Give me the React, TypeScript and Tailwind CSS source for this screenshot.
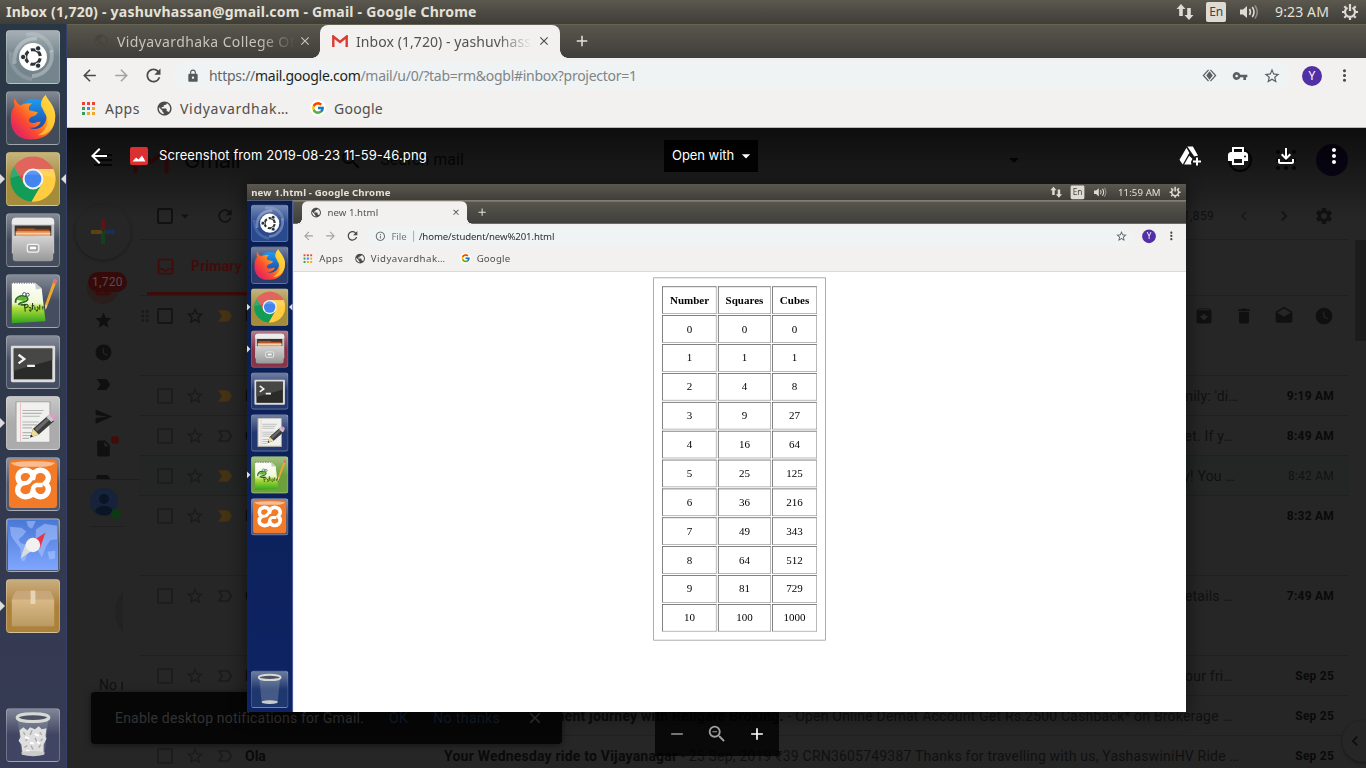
import React from "react";
import {
  MdAdd, MdArchive, MdArrowBack, MdArrowDropDown, MdArrowForward, MdChevronLeft,
  MdChevronRight, MdClose, MdDelete, MdDrafts, MdDragIndicator, MdInfoOutline, MdInsertDriveFile,
  MdLabel, MdLabelImportant, MdLabelImportantOutline, MdLock, MdMenu, MdMoreVert, MdMoveToInbox,
  MdOutlineFileDownload, MdOutlineInbox, MdPublic, MdRefresh, MdRemove, MdSearch, MdSend, MdSettings, MdStar,
  MdStarBorder, MdVpnKey, MdWatchLater, MdZoomOut,
} from "react-icons/md";
import { FcGoogle } from "react-icons/fc";

/* ------------------------------ Dock icons ------------------------------ */

const art = "block h-full w-full";

const UbuntuArt = () => (
  <svg viewBox="0 0 54 54" className={art}>
    <g fill="none" stroke="#fff" strokeWidth="4">
      <path d="M8 34C6 18 17 7 31 8" opacity=".3" />
      <path d="M46 20c3 14-6 26-20 27" opacity=".3" />
      <path d="M20 4c14-3 25 6 27 18" opacity=".18" />
      <path d="M4 22c-2 14 8 26 22 28" opacity=".15" />
    </g>
    <circle cx="27" cy="27" r="14.5" fill="#fff" />
    <circle cx="27" cy="27" r="7.6" fill="none" stroke="#2b3338" strokeWidth="3.2" strokeDasharray="13 2.9" strokeDashoffset="-1.5" />
    <g fill="#2b3338" stroke="#fff" strokeWidth="1">
      <circle cx="16.8" cy="27" r="2.8" />
      <circle cx="32.3" cy="18" r="2.8" />
      <circle cx="32.3" cy="36" r="2.8" />
    </g>
  </svg>
);

const FirefoxArt = () => (
  <svg viewBox="0 0 54 54" className={art}>
    <defs>
      <linearGradient id="fxBody" x1="0.9" y1="0.1" x2="0.15" y2="0.8">
        <stop offset="0" stopColor="#ffe94a" />
        <stop offset=".4" stopColor="#ff9a1f" />
        <stop offset=".75" stopColor="#fb4a30" />
        <stop offset="1" stopColor="#e62a5c" />
      </linearGradient>
      <linearGradient id="fxGlobe" x1="0" y1="0" x2="0" y2="1">
        <stop offset="0" stopColor="#1f9bf0" />
        <stop offset="1" stopColor="#1b3d9c" />
      </linearGradient>
    </defs>
    <circle cx="28" cy="25" r="18" fill="url(#fxGlobe)" />
    <path d="M8 6c1 4 3 6 6 8 3-2 8-3 12-2-3 2-4 4-3 7l9 2c-1 3-4 4-7 5-3 2-3 5 0 6 4 1 6-2 10-1-2 5-7 7-12 6 8 4 17-1 18-10 0-5-2-8-5-11-2-4 0-9 4-13 2 5 9 10 10 20 1 16-9 26-23 26C13 51 3 41 4 27c0-7 2-10 4-12-1-3-1-6 0-9z" fill="url(#fxBody)" />
    <path d="M40 3c3 8 9 12 10 20 1 14-8 22-18 22 8-4 12-12 9-20-4-6-7-12-1-22z" fill="#ffd23c" opacity=".75" />
  </svg>
);

const ChromeArt = () => (
  <svg viewBox="0 0 54 54" className={art}>
    <path d="M27 16.500H48.020A23.500 23.500 0 0 0 7.400 14.050L17.900 32.250Z" fill="#db4b3f" />
    <path d="M27 16.500H48.020A23.500 23.500 0 0 0 7.400 14.050L17.900 32.250Z" fill="#119c58" transform="rotate(-120 27 27)" />
    <path d="M27 16.500H48.020A23.500 23.500 0 0 0 7.400 14.050L17.900 32.250Z" fill="#ffcd42" transform="rotate(120 27 27)" />
    <circle cx="27" cy="27" r="10.800" fill="#f3f3f3" />
    <circle cx="27" cy="27" r="8.700" fill="#4384f0" />
    <path d="M4 26a23 23 0 0 1 46 0C38 21 16 21 4 26z" fill="#fff" opacity=".15" />
  </svg>
);

const FilesArt = () => (
  <svg viewBox="0 0 54 54" className={art}>
    <defs>
      <linearGradient id="flFront" x1="0" y1="0" x2="0" y2="1">
        <stop offset="0" stopColor="#d4d4d4" />
        <stop offset="1" stopColor="#989898" />
      </linearGradient>
    </defs>
    <path d="M5 8q0-4 4-4h36q4 0 4 4v33H5z" fill="#c4c4c4" />
    <path d="M5 8q0-4 4-4h36q4 0 4 4v3H5z" fill="#ececec" />
    <path d="M8 12h38v14H8z" fill="#3a342f" />
    <path d="M10 15h18l2 1h14v10H10z" fill="#b5521f" />
    <path d="M9 18h36v8H9z" fill="#e9a166" />
    <path d="M9 20h36v1H9z" fill="#f7e0c6" />
    <path d="M6 22.500q14 1 42 0V46q0 3-3 3H9q-3 0-3-3z" fill="url(#flFront)" />
    <rect x="21" y="31.500" width="12" height="8" rx="2" fill="#a9a9a9" stroke="#f2f2f2" strokeWidth="1.300" />
    <rect x="24" y="34" width="6" height="2.500" fill="#fff" />
  </svg>
);

const NotepadqqArt = () => (
  <svg viewBox="0 0 54 54" className={art}>
    <defs>
      <linearGradient id="nqPage" x1="0" y1="0" x2="0" y2="1">
        <stop offset="0" stopColor="#fff" />
        <stop offset=".5" stopColor="#eef8d6" />
        <stop offset=".62" stopColor="#b4de3c" />
        <stop offset="1" stopColor="#2fa51c" />
      </linearGradient>
    </defs>
    <path d="M5 8h24l7 6 4 34-35 2z" fill="url(#nqPage)" />
    <path d="M29 8l1 7 6-1z" fill="#c9c9c9" />
    <path d="M5 8h24" stroke="#777" strokeWidth="2" strokeDasharray="1 1.500" />
    <path d="M9 29c-1-5 4-8 8-7 4 0 6 3 3 5-3 2-7 1-8 4M14 31h6" fill="none" stroke="#2b6b1a" strokeWidth="1.800" />
    <path d="M10 26c2-4 8-5 11-2l-3 3z" fill="#5cb82c" />
    <circle cx="18" cy="20" r="1.800" fill="#fff" stroke="#345" strokeWidth=".9" />
    <circle cx="21.500" cy="20.500" r="1.600" fill="#fff" stroke="#345" strokeWidth=".9" />
    <path d="M18 30l1 8M18 31q4-2 4 2l-3 1M23 34q2-1 2 2t-2 0M26.500 29v7M25.500 32h3M29 33v3M31 33q2 0 1 3t-2 0M34 31v5M36 33q2 0 1 3M38 33h4" fill="none" stroke="#24421a" strokeWidth="1.100" />
    <path d="M49 4l3 1.500L42 32l-2 4-.500-5z" fill="#f0a62f" />
    <path d="M49 4l3 1.500-1.500 4-3-1.500z" fill="#d9727c" />
    <path d="M39.500 31l2.500 1-2 4z" fill="#e9d2a7" />
  </svg>
);

const TerminalArt = () => (
  <svg viewBox="0 0 54 54" className={art}>
    <rect x="4" y="10" width="46" height="38" rx="1.500" fill="#dcdcdc" />
    <rect x="7" y="13" width="40" height="32" fill="#2a2a29" />
    <path d="M7 13h40v12L7 36z" fill="#474746" />
    <path d="M12 19.500l6 4.500-6 4.500M21 31h8" fill="none" stroke="#f3f3f3" strokeWidth="2.400" />
  </svg>
);

const EditorArt = () => (
  <svg viewBox="0 0 54 54" className={art}>
    <rect x="8.500" y="4.500" width="37" height="44" rx="1" fill="#a9a9a9" />
    <rect x="10" y="5.500" width="34" height="41" fill="#f0f0ef" />
    <path d="M14 6v40" stroke="#f0b4b4" strokeWidth=".8" />
    <path d="M16 14h22M16 17h20M16 20h18M16 26h17M16 29h15M16 32h10M16 37h9M16 40h9M16 43h7" stroke="#b5b5b5" strokeWidth="1.200" />
    <path d="M24 42l3-9 16-14 6 6-16 14z" fill="#3c3c3c" />
    <path d="M29 33l15-13 2 2-15 14z" fill="#6a6a6a" />
    <path d="M24 42l3-9 6 6z" fill="#ecdc95" />
    <path d="M24 42l1-3 2 2z" fill="#222" />
    <path d="M41 21l3-3 5 6-3 2z" fill="#c8c8c8" />
    <path d="M44 18q3-2 5 1 2 2 0 4l-1 1z" fill="#e39ac9" />
  </svg>
);

const XamppArt = () => (
  <svg viewBox="0 0 54 54" className={art}>
    <rect x="2" y="2" width="50" height="50" rx="4" fill="#f37a26" />
    <path d="M4 5q23-3 46 0-2 3-10 4H14Q6 8 4 5z" fill="#fff" opacity=".5" />
    <path d="M27 20C27 13 19 11 14 14.500 10 18 11 24 15 26.500 10 30 10 36 14 38.500 19 42 27 40 27 34 28 40 35 42 40 38.500 44 35 44 29 39.500 26.500 44 23 44 18 40 14.500 35 11 27 13 27 20Z" fill="none" stroke="#fff" strokeWidth="5.500" strokeLinejoin="round" />
    <path d="M15 26q7 1 9-3 2-3 3-3v3M27 33q0-4 4-5h6" fill="none" stroke="#fff" strokeWidth="4.500" />
  </svg>
);

const MapArt = () => (
  <svg viewBox="0 0 54 54" className={art}>
    <defs>
      <linearGradient id="mpSea" x1="0" y1="0" x2="0" y2="1">
        <stop offset="0" stopColor="#4a78d6" />
        <stop offset="1" stopColor="#7fa6ff" />
      </linearGradient>
    </defs>
    <rect x="1" y="1" width="52" height="52" fill="url(#mpSea)" />
    <path d="M3 8l12 1 5 4-4 5-4 3 2 4 6 2 3 5-5 12-3-1-1-12-6-8-4-6zM20 2h10l-4 8-4-2zM30 11l9-6 13 2v14l-7 1-4 6-4-4-7-1zM29 22l8 0 4 6-5 12-5-10zM42 34l8-1v8l-6 1z" fill="#b4ccff" opacity=".5" />
    <path d="M40 14L34 31l-9-7z" fill="#e9354c" />
    <path d="M14 41l6-17 9 7z" fill="#d8dcdf" />
    <circle cx="27" cy="27" r="7.500" fill="#f1f1f1" />
  </svg>
);

const BoxArt = () => (
  <svg viewBox="0 0 54 54" className={art}>
    <defs>
      <linearGradient id="bxFront" x1="0" y1="0" x2="0" y2="1">
        <stop offset="0" stopColor="#d9b987" />
        <stop offset="1" stopColor="#bb9a62" />
      </linearGradient>
    </defs>
    <path d="M9 11h36l4 10v27H5V21z" fill="#b18c50" />
    <path d="M9 11h36l4 9H5z" fill="#c9a67a" />
    <rect x="5" y="20" width="44" height="28" rx="1" fill="url(#bxFront)" />
    <path d="M24.500 11h5v14h-5z" fill="#eadbc0" opacity=".85" />
  </svg>
);

const TrashArt = ({ full }: { full?: boolean }) => (
  <svg viewBox="0 0 54 54" className={art}>
    <path d="M11 9h32l-4 38q-12 3-24 0z" fill="#aeb6c4" opacity=".28" />
    {full && (
      <g>
        <path d="M13 22l4-3 4 3 3-3 5 2 4-3 3 3 5-1-1 8 1 3-3 6 0 8q-11 3-22 0l-1-8-3-4 2-4z" fill="#dedede" />
        <path d="M17 24l2 3M26 22l-2 5M34 24l2 3M19 33l3-2M29 30l2 4M35 33l2-2M18 40l3-2M25 38l2 4M33 40l2-3" stroke="#a9a9a9" strokeWidth="1.400" />
        <path d="M19 29l4 2M29 26l4 2M24 35l4 1M34 36l-3-2M20 43l4 1" stroke="#fff" strokeWidth="2" />
      </g>
    )}
    <path d="M15 45q12-3 24 0l-.5 2.500q-11 3-23 0z" fill="#c9ccc9" />
    <ellipse cx="27" cy="9" rx="16.500" ry="4" fill="#4c5263" stroke="#d7d9d5" strokeWidth="3" />
  </svg>
);

type Tile = { id: string; tone: string; icon: React.ReactNode; left?: boolean; right?: boolean };

const DockTile = ({ tile }: { tile: Tile }) => (
  <div className="relative mx-auto h-[54px] w-[67px] shrink-0">
    {tile.left && <span className="absolute left-0 top-[22px] border-y-[5px] border-l-[5px] border-y-transparent border-l-[#dcdcdc]" />}
    {tile.right && <span className="absolute right-px top-[22px] border-y-[5px] border-r-[5px] border-y-transparent border-r-[#dcdcdc]" />}
    <div className={`ml-[6px] h-[54px] w-[54px] overflow-hidden rounded-[4px] border border-white/25 bg-linear-to-b from-white/35 to-transparent to-50% ${tile.tone}`}>
      {tile.icon}
    </div>
  </div>
);

const Dock = ({ tiles, trash, skin }: { tiles: Tile[]; trash: Tile; skin: string }) => (
  <aside className={`flex w-[67px] shrink-0 flex-col gap-[7px] border-r pb-[6px] pt-[6px] ${skin}`}>
    {tiles.map((t) => <DockTile key={t.id} tile={t} />)}
    <div className="mt-auto"><DockTile tile={trash} /></div>
  </aside>
);

const hostTiles: Tile[] = [
  { id: "dash", tone: "bg-[#74858d]", icon: <UbuntuArt /> },
  { id: "firefox", tone: "bg-[#414b5a]", icon: <FirefoxArt /> },
  { id: "chrome", tone: "bg-[#a58c3a]", icon: <ChromeArt />, left: true, right: true },
  { id: "files", tone: "bg-[#434d5d]", icon: <FilesArt /> },
  { id: "notepad", tone: "bg-[#454e60]", icon: <NotepadqqArt /> },
  { id: "terminal", tone: "bg-[#454e62]", icon: <TerminalArt /> },
  { id: "editor", tone: "bg-[#ababab]", icon: <EditorArt />, left: true },
  { id: "xampp", tone: "bg-[#4c566c]", icon: <XamppArt /> },
  { id: "map", tone: "bg-[#4c566c]", icon: <MapArt /> },
  { id: "box", tone: "bg-[#ac813a]", icon: <BoxArt />, left: true },
];

const innerTiles: Tile[] = [
  { id: "dash", tone: "bg-[#2a4a90]", icon: <UbuntuArt /> },
  { id: "firefox", tone: "bg-[#2a3d6c]", icon: <FirefoxArt /> },
  { id: "chrome", tone: "bg-[#a58c3a]", icon: <ChromeArt />, left: true, right: true },
  { id: "files", tone: "bg-[#87344a]", icon: <FilesArt />, left: true },
  { id: "terminal", tone: "bg-[#23386f]", icon: <TerminalArt /> },
  { id: "editor", tone: "bg-[#23386f]", icon: <EditorArt /> },
  { id: "notepad", tone: "bg-[#6da03c]", icon: <NotepadqqArt />, left: true },
  { id: "xampp", tone: "bg-[#3f5585]", icon: <XamppArt /> },
];

/* ------------------------------ System bar ------------------------------ */

const SystemBar = ({ title, clock }: { title: string; clock: string }) => (
  <header className="flex h-6 shrink-0 items-center bg-linear-to-b from-[#5b584f] to-[#3e3d38] pl-[6px] pr-[7px] text-[#e6e1d6]">
    <h1 className="text-[14px] font-bold leading-6 tracking-[0.23px]">{title}</h1>
    <div className="ml-auto flex items-center">
      <svg viewBox="0 0 18 18" className="mr-[12px] h-[18px] w-[18px]" fill="#dfdbd2">
        <path d="M5 1l4.500 5H6.800v7H3.200V6H.5zM13 17l-4.500-5h2.700V5h3.600v7h2.700z" />
      </svg>
      <span className="mr-[13px] flex h-5 w-5 items-center justify-center rounded-[2px] bg-[#dfdbd2] text-[12px] tracking-[-0.2px] text-[#45433e]">En</span>
      <svg viewBox="0 0 20 18" className="mr-[16px] h-[18px] w-5" fill="none" stroke="#dfdbd2" strokeWidth="1.600">
        <path d="M1 6.500h3l4-3.500v12l-4-3.500H1z" fill="#dfdbd2" stroke="none" />
        <path d="M10.500 6q1.800 3 0 6M13.300 4q3.400 5 0 10" />
        <path d="M16 2.500q4.600 6.500 0 13" opacity=".45" />
      </svg>
      <span className="text-[14px] leading-6 tracking-[0.13px]">{clock}</span>
      <svg viewBox="0 0 18 18" className="ml-[12px] h-[18px] w-[18px]" fill="none" stroke="#dfdbd2">
        <path d="M6.500 4.600a5 5 0 1 0 5 0" strokeWidth="2.200" />
        <path d="M9 1v7M3.300 3.300l1.700 1.700M14.700 3.300L13 5M1 9h2.400M14.600 9H17M3.300 14.700L5 13M14.700 14.700L13 13M9 14.600V17" strokeWidth="2.200" />
      </svg>
    </div>
  </header>
);

/* ---------------------------- Browser chrome ---------------------------- */

const TabStrip = ({ children }: { children: React.ReactNode }) => (
  <div className="flex h-[34px] shrink-0 items-stretch border-t border-[#666350] bg-linear-to-b from-[#58564d] to-[#3f3e3a] pl-[13px]">
    {children}
    <MdAdd className="ml-[13px] mt-[7px] h-[18px] w-[18px] text-[#e4e2dc]" />
  </div>
);

const ActiveTab = ({ icon, label, gap }: { icon: React.ReactNode; label: string; gap: string }) => (
  <div className="relative flex w-[240px] items-center rounded-t-[8px] bg-[#f2f1ef] pb-px pl-3 pr-[9px] text-[14px] tracking-[0.07px] text-[#52524f]">
    <span className="absolute -left-2 bottom-0 h-2 w-2 bg-[radial-gradient(circle_at_0_0,transparent_7.5px,#f2f1ef_8px)]" />
    <span className="absolute -right-2 bottom-0 h-2 w-2 bg-[radial-gradient(circle_at_100%_0,transparent_7.5px,#f2f1ef_8px)]" />
    {icon}
    <span className={`w-[176px] overflow-hidden whitespace-nowrap mask-r-from-80% mask-r-to-100% ${gap}`}>{label}</span>
    <MdClose className="ml-auto h-[14px] w-[14px] text-[#4c4c49]" />
  </div>
);

const AppsGrid = () => (
  <svg viewBox="0 0 13 13" className="h-[13px] w-[13px]">
    {["#ea4335", "#ea4335", "#ea4335", "#34a05c", "#4285f4", "#f3a72b", "#34a05c", "#f3a72b", "#f3a72b"].map((c, i) => (
      <rect key={i} x={(i % 3) * 5} y={Math.floor(i / 3) * 5} width="3" height="3" fill={c} />
    ))}
  </svg>
);

const Bookmarks = () => (
  <nav className="flex h-[34px] shrink-0 items-center pb-[4px] pl-[15px] text-[14px] text-[#4f4f4c]">
    <AppsGrid />
    <span className="ml-[10px] w-[51px] tracking-[0.53px]">Apps</span>
    <MdPublic className="h-[17px] w-[17px] text-[#4a4a48]" />
    <span className="ml-[7px] w-[130px] tracking-[0.71px]">Vidyavardhak…</span>
    <span className="flex h-4 w-4 items-center justify-center rounded-full bg-white"><FcGoogle className="h-[14px] w-[14px]" /></span>
    <span className="ml-2 tracking-[0.3px]">Google</span>
  </nav>
);

const AddressRow = ({ dimBack, children, tools }: { dimBack?: boolean; children: React.ReactNode; tools?: React.ReactNode }) => (
  <div className="flex h-[35px] shrink-0 items-center pl-[13px] pr-[12px]">
    <MdArrowBack className={`h-[19px] w-[19px] ${dimBack ? "text-[#9e9e9b]" : "text-[#4a4a48]"}`} />
    <MdArrowForward className="ml-[13px] h-[19px] w-[19px] text-[#a3a3a0]" />
    <MdRefresh className="ml-[12px] h-[21px] w-[21px] text-[#4a4a48]" />
    <div className="ml-[10px] flex h-7 flex-1 items-center rounded-full bg-[#eff3f4] pl-3 pr-[9px] text-[14px]">
      {children}
      <span className="ml-auto flex items-center gap-[15px] text-[#5b5f61]">
        {tools}
        <MdStarBorder className="h-[18px] w-[18px]" />
      </span>
    </div>
    <span className="ml-3 flex h-5 w-5 items-center justify-center rounded-full bg-[#5130a5] text-[12px] text-white">Y</span>
    <MdMoreVert className="ml-[13px] h-[19px] w-[19px] text-[#4a4a48]" />
  </div>
);

/* --------------------- Desktop inside the previewed file --------------------- */

const tableRows = Array.from({ length: 11 }, (_, n) => [n, n * n, n * n * n]);

const PreviewDesktop = () => (
  <div className="flex h-[768px] w-[1366px] origin-top-left scale-[0.6875] flex-col bg-white">
    <SystemBar title="new 1.html - Google Chrome" clock="11:59 AM" />
    <div className="flex flex-1">
      <Dock tiles={innerTiles} trash={{ id: "trash", tone: "bg-[#1f376f]", icon: <TrashArt /> }} skin="bg-linear-to-b from-[#0a1e50] to-[#0e2464] border-[#132f7c]" />
      <div className="flex flex-1 flex-col">
        <TabStrip>
          <ActiveTab icon={<MdPublic className="h-[17px] w-[17px] text-[#4a4a48]" />} gap="ml-[8px]" label="new 1.html" />
        </TabStrip>
        <div className="border-b border-[#cfcfcd] bg-[#f2f1ef]">
          <AddressRow dimBack>
            <MdInfoOutline className="h-4 w-4 text-[#5f6365]" />
            <span className="ml-[8px] w-[25px] text-[#77797a]">File</span>
            <span className="ml-[7px] h-4 w-px bg-[#8b8d8e]" />
            <span className="ml-[7px] tracking-[-0.17px] text-[#2c2f30]">/home/student/new%201.html</span>
          </AddressRow>
          <Bookmarks />
        </div>
        <main className="flex-1 pt-2 font-['Liberation_Serif',serif] text-[16px] leading-[18px] text-black">
          <table className="mx-auto border-separate border-spacing-[2px] border border-[#8a8a8a] p-[10px] text-center">
            <thead>
              <tr>
                {["Number", "Squares", "Cubes"].map((h) => (
                  <th key={h} className="border border-b-[#9a9a9a] border-l-[#4a4a4a] border-r-[#9a9a9a] border-t-[#4a4a4a] p-[10px]">{h}</th>
                ))}
              </tr>
            </thead>
            <tbody>
              {tableRows.map((r) => (
                <tr key={r[0]}>
                  {r.map((v, i) => (
                    <td key={i} className="border border-b-[#9a9a9a] border-l-[#4a4a4a] border-r-[#9a9a9a] border-t-[#4a4a4a] p-[10px]">{v}</td>
                  ))}
                </tr>
              ))}
            </tbody>
          </table>
        </main>
      </div>
    </div>
  </div>
);

/* ------------------------------ Dimmed mailbox ------------------------------ */

type Mail = {
  tall?: boolean; hot?: boolean; read?: boolean; important?: boolean;
  sender: string; subject?: string; snippet?: string; pad?: string; date: string;
};

const mails: Mail[] = [
  { tall: true, hot: true, important: true, sender: "I", date: "" },
  { important: true, sender: "I", snippet: "family: 'di…", pad: "pr-[2px]", date: "9:19 AM" },
  { sender: "G", snippet: "internet. If y…", pad: "pr-[7px]", date: "8:49 AM" },
  { read: true, important: true, sender: "", snippet: "today! You …", pad: "pr-[5px]", date: "8:42 AM" },
  { tall: true, important: true, sender: "I", date: "8:32 AM" },
  { tall: true, sender: "G", snippet: "details …", pad: "pr-[7px]", date: "7:49 AM" },
  { sender: "I", snippet: "your fri…", pad: "pr-[7px]", date: "Sep 25" },
  { sender: "", subject: "investment journey with Religare Broking.", snippet: " - Open Online Demat Account Get Rs.2500 Cashback* on Brokerage …", pad: "pr-[8px]", date: "Sep 25" },
  { sender: "Ola", subject: "Your Wednesday ride to Vijayanagar", snippet: " - 25 Sep, 2019 ₹39 CRN3605749387 Thanks for travelling with us, YashaswiniHV Ride …", pad: "pr-px", date: "Sep 25" },
];

const MailRow = ({ mail }: { mail: Mail }) => (
  <div className={`mr-[17px] flex shrink-0 items-start border-b border-[#202020] ${mail.tall ? "h-20" : "h-10"} ${mail.read ? "bg-[#232625]" : ""}`}>
    <div className="flex h-10 w-full items-center">
      <div className="flex w-[11px] justify-center">{mail.hot && <MdDragIndicator className="h-[18px] w-[18px] shrink-0 text-[#1b1b1b]" />}</div>
      <div className="flex w-[30px] justify-center"><span className={`h-4 w-4 rounded-[2px] border-2 ${mail.hot ? "border-[#151515]" : "border-[#1d1d1d]"}`} /></div>
      <div className="flex w-[30px] justify-center"><MdStarBorder className={`h-5 w-5 ${mail.hot ? "text-[#141414]" : "text-[#1b1b1b]"}`} /></div>
      <div className="flex w-[30px] justify-center">
        {mail.important ? <MdLabelImportant className="h-5 w-5 text-[#443212]" /> : <MdLabelImportantOutline className="h-5 w-5 text-[#1b1b1b]" />}
      </div>
      <div className="ml-[5px] w-[200px] shrink-0 font-bold text-[#0a0a0a]">{mail.sender}</div>
      <div className={`flex w-[795px] shrink-0 justify-end whitespace-pre tracking-[0.2px] ${mail.pad ?? ""}`}>
        {mail.subject && <span className="font-bold text-[#0a0a0a]">{mail.subject}</span>}
        <span className="text-[#101010]">{mail.snippet}</span>
      </div>
      {mail.hot ? (
        <div className="flex w-[104px] shrink-0 justify-end">
          {[MdArchive, MdDelete, MdDrafts, MdWatchLater].map((Icon, i) => (
            <span key={i} className="flex w-10 shrink-0 justify-center"><Icon className="h-5 w-5 text-[#101010]" /></span>
          ))}
        </div>
      ) : (
        <div className={`w-[94px] text-right text-[12px] tracking-[0.22px] ${mail.read ? "text-[#121212]" : "font-bold text-[#0a0a0a]"}`}>{mail.date}</div>
      )}
    </div>
  </div>
);

const Mailbox = () => (
  <div className="absolute inset-0 flex flex-col overflow-hidden bg-[#262626] font-['Roboto',sans-serif] text-[14px]">
    <div className="flex h-16 shrink-0 items-center pl-[24px] text-[#060606]">
      <MdMenu className="h-6 w-6" />
      <svg viewBox="0 0 36 26" className="ml-[18px] h-[26px] w-9 fill-none stroke-[#420c0b]" strokeWidth="4">
        <path d="M2.500 26V3l15.500 12L33.500 3v23" />
      </svg>
      <span className="ml-[15px] font-['Inter',sans-serif] text-[22px] tracking-[-0.5px]">Gmail</span>
      <MdSearch className="ml-[99px] h-6 w-6" />
      <span className="ml-[17px] text-[16px]">Search mail</span>
      <MdArrowDropDown className="ml-auto h-6 w-6" />
      <span className="ml-[202px] h-6 w-6 rounded-full border-2 border-[#060606]" />
      <span className="ml-[24px] grid grid-cols-3 gap-1">
        {Array.from({ length: 9 }, (_, i) => <i key={i} className="h-1 w-1 rounded-full bg-[#060606]" />)}
      </span>
      <span className="ml-[20px] mr-[18px] h-8 w-8 rounded-full bg-[#0b061a]" />
    </div>
    <div className="flex min-h-0 flex-1">
      <div className="flex w-[72px] shrink-0 flex-col text-[#101010]">
        <div className="flex h-20 shrink-0 justify-center pt-[12px]">
          <span className="flex h-14 w-14 items-center justify-center rounded-full bg-[#262626] shadow-[0_1px_3px_rgba(0,0,0,0.35)]">
            <svg viewBox="0 0 24 24" className="h-6 w-6">
              <path d="M10 0h4v10h-4z" fill="#5c1512" />
              <path d="M0 10h10l4 4H0z" fill="#5a430f" />
              <path d="M14 10h10v4H14z" fill="#173054" />
              <path d="M10 14l4-4v14h-4z" fill="#15401f" />
            </svg>
          </span>
        </div>
        <div className="relative flex h-[208px] shrink-0 flex-col items-center overflow-hidden border-b border-[#1e1e1e]">
          <span className="flex h-8 w-8 shrink-0 items-center justify-center rounded-full bg-[#2a1e1d]"><MdMoveToInbox className="h-5 w-5 text-[#3c0b0a]" /></span>
          <span className="absolute left-[21px] top-0 flex h-5 w-[39px] items-center justify-center rounded-full bg-[#340a0a] text-[12px] tracking-[0.3px] text-[#5b4c4c]">1,720</span>
          {[MdStar, MdWatchLater, MdLabelImportant, MdSend, MdInsertDriveFile, MdLabel].map((Icon, i) => (
            <span key={i} className="relative flex h-8 w-8 shrink-0 items-center justify-center">
              <Icon className="h-[19px] w-[19px]" />
              {i === 4 && <i className="absolute right-0 top-1 h-2 w-2 rounded-full bg-[#420c0b]" />}
            </span>
          ))}
        </div>
        <div className="relative ml-[23px] flex h-[47px] w-[34px] shrink-0 border-b border-[#1e1e1e] pt-2">
          <svg viewBox="0 0 28 28" className="h-7 w-7">
            <circle cx="14" cy="14" r="14" fill="#16233a" />
            <circle cx="14" cy="11" r="5" fill="#0a1526" />
            <path d="M5 24q1-6 9-6t9 6q-9 7-18 0z" fill="#0a1526" />
          </svg>
          <i className="absolute left-[21px] top-[29px] h-[10px] w-[10px] rounded-full bg-[#0d3a12]" />
        </div>
        <div className="ml-[23px] flex w-[33px] flex-col overflow-hidden">
          <span className="ml-[25px] mt-[56px] h-[58px] w-[58px] shrink-0 rounded-full bg-[#222]" />
          <span className="ml-[9px] mt-[34px] whitespace-nowrap leading-5">No recent chats</span>
        </div>
      </div>
      <div className="relative flex min-w-0 flex-1 flex-col">
        <div className="mr-[17px] flex h-12 shrink-0 items-center border-b border-[#202020] text-[#111]">
          <span className="ml-[18px] h-4 w-4 rounded-[2px] border-2 border-[#111]" />
          <MdArrowDropDown className="ml-[3px] h-[18px] w-[18px]" />
          <MdRefresh className="ml-[21px] h-5 w-5" />
          <span className="ml-auto mr-[10px] text-[12px] tracking-[0.3px]">1–50 of 1,859</span>
          {[MdChevronLeft, MdChevronRight].map((Icon, i) => (
            <span key={i} className="flex w-10 justify-center"><Icon className={`h-5 w-5 ${i ? "" : "text-[#191919]"}`} /></span>
          ))}
          <span className="mr-[5px] flex w-10 justify-center"><MdSettings className="h-5 w-5" /></span>
        </div>
        <div className="mr-[17px] flex h-14 shrink-0 items-stretch border-b border-[#202020]">
          <div className="ml-2 flex w-[240px] items-center border-b-[3px] border-[#3c0b0a] font-bold text-[#420c0b]">
            <MdOutlineInbox className="ml-[8px] h-[21px] w-[21px]" />
            <span className="ml-[15px] tracking-[0.17px]">Primary</span>
          </div>
        </div>
        {mails.map((m, i) => <MailRow key={i} mail={m} />)}
        <span className="absolute right-0 top-12 h-[101px] w-[11px] bg-[#1c1c1c]" />
        <span className="absolute -right-[18px] bottom-[6px] flex h-[42px] w-[42px] items-center rounded-full bg-[#262626] pl-[3px] shadow-[0_1px_3px_rgba(0,0,0,0.45)]"><MdChevronLeft className="h-5 w-5 text-[#0c0c0c]" /></span>
      </div>
    </div>
    <div className="absolute bottom-6 left-6 flex h-[52px] w-[471px] items-center rounded-[4px] bg-[#060606] pl-6 text-[#333] shadow-[0_1px_6px_rgba(0,0,0,0.5)]">
      <span className="tracking-[0.2px]">Enable desktop notifications for Gmail.</span>
      <span className="ml-[25px] tracking-[0.4px] text-[#131c2a]">OK</span>
      <span className="ml-[25px] tracking-[0.4px] text-[#131c2a]">No thanks</span>
      <MdClose className="ml-[26px] h-[18px] w-[18px]" />
    </div>
  </div>
);

/* ------------------------------ File viewer ------------------------------ */

const DriveAddIcon = () => (
  <svg viewBox="0 0 24 24" className="h-6 w-6" fill="currentColor">
    <path d="M9.300 2.500h5.600l5.200 9.200a7 7 0 0 0-3.800.9L9.300 2.500z" />
    <path d="M8.500 3.800L11.300 8.700 4.700 20.500 1.500 15.700z" />
    <path d="M9 15.500l2.200-3.800 3.200 3a6 6 0 0 0-.9 5.800H6.200z" />
    <path d="M18 13.500h2v3h3v2h-3v3h-2v-3h-3v-2h3z" />
  </svg>
);

const PrintIcon = () => (
  <svg viewBox="0 0 24 24" className="h-6 w-6" fill="currentColor" fillRule="evenodd">
    <path d="M19 8h-1V3H6v5H5c-1.660 0-3 1.340-3 3v6h4v4h12v-4h4v-6c0-1.660-1.340-3-3-3zM8 5h8v3H8V5zm8 14H8v-4h8v4zm2-6.500a1 1 0 1 1 2 0 1 1 0 0 1-2 0z" />
  </svg>
);

const Viewer = () => (
  <section className="absolute inset-0 overflow-hidden">
    <div className="absolute inset-x-0 top-0 h-[90px] bg-linear-to-b from-black/65 to-transparent" />
    <div className="absolute left-[180px] top-14 h-[528px] w-[939px] overflow-hidden shadow-[0_2px_16px_2px_rgba(0,0,0,0.45)]">
      <PreviewDesktop />
    </div>
    <div className="absolute inset-x-0 top-0 flex h-14 items-center pl-5 pr-5 font-['Inter',sans-serif] text-[13px] text-white">
      <MdArrowBack className="h-6 w-6" />
      <svg viewBox="0 0 18 18" className="ml-[19px] h-[18px] w-[18px]">
        <rect width="18" height="18" rx="2" fill="#dc2f32" />
        <path d="M2.500 14.500l3.500-4 2.500 2 3.500-4 3.500 6z" fill="#fff" />
      </svg>
      <span className="ml-[11px] w-[505px] tracking-[0.08px]">Screenshot from 2019-08-23 11-59-46.png</span>
      <span className="flex h-8 w-[94px] items-center bg-black/90 pl-2 tracking-[-0.05px]">
        Open with
        <MdArrowDropDown className="ml-[2px] h-5 w-5 shrink-0" />
      </span>
      <div className="ml-auto flex items-center gap-6">
        <DriveAddIcon />
        <PrintIcon />
        <MdOutlineFileDownload className="h-6 w-6" />
        <MdMoreVert className="h-6 w-6" />
      </div>
    </div>
    <div className="absolute left-[588px] top-[584px] flex h-11 w-[124px] items-center justify-between bg-black/75 px-3 text-white">
      <MdRemove className="h-5 w-5 text-[#8c8c8c]" />
      <MdZoomOut className="h-[22px] w-[22px] text-[#a0a0a0]" />
      <MdAdd className="h-5 w-5" />
    </div>
  </section>
);

const GmailMark = () => (
  <svg viewBox="0 0 16 12" className="h-3 w-4">
    <rect width="16" height="12" rx="1" fill="#f3f0ef" />
    <path d="M1.300 12V1.500L8 7l6.700-5.500V12" fill="none" stroke="#d93b32" strokeWidth="2.400" />
  </svg>
);

export default function App() {
  return (
    <div className="flex h-[768px] w-[1366px] flex-col overflow-hidden font-['Noto_Sans',sans-serif]">
      <SystemBar title="Inbox (1,720) - yashuvhassan@gmail.com - Gmail - Google Chrome" clock="9:23 AM" />
      <div className="flex min-h-0 flex-1">
        <Dock tiles={hostTiles} trash={{ id: "trash", tone: "bg-[#3f4562]", icon: <TrashArt full /> }} skin="bg-linear-to-b from-[#293744] to-[#373b55] border-[#353e6c]" />
        <div className="flex min-w-0 flex-1 flex-col">
          <TabStrip>
            <div className="flex w-[240px] items-center pb-px pl-[13px] pr-[8px] text-[14px] tracking-[0.39px] text-[#c6c4bc]">
              <MdPublic className="h-4 w-4 text-[#46453f]" />
              <span className="ml-2 w-[178px] overflow-hidden whitespace-nowrap mask-r-from-80% mask-r-to-100%">Vidyavardhaka College Of</span>
              <MdClose className="ml-auto h-[14px] w-[14px]" />
            </div>
            <ActiveTab icon={<GmailMark />} gap="ml-2" label="Inbox (1,720) - yashuvhass" />
          </TabStrip>
          <div className="border-b border-[#b9b9b7] bg-[#f2f1ef]">
            <AddressRow
              tools={
                <>
                  <svg viewBox="0 0 16 16" className="h-[15px] w-[15px]" fill="none" stroke="currentColor" strokeWidth="1.300">
                    <path d="M7 2L1.500 8 7 14M9 2l5.500 6L9 14" />
                    <path d="M8 3.500L11.500 8 8 12.500 4.500 8z" fill="currentColor" stroke="none" />
                  </svg>
                  <MdVpnKey className="h-4 w-4" />
                </>
              }
            >
              <MdLock className="h-[14px] w-[14px] text-[#55595b]" />
              <span className="ml-[9px] tracking-[-0.28px] text-[#808587]">
                <span className="text-[#63676a]">https://</span>
                <span className="text-[#1d1f20]">mail.google.com</span>
                /mail/u/0/?tab=rm&amp;ogbl#inbox?projector=1
              </span>
            </AddressRow>
            <Bookmarks />
          </div>
          <div className="relative min-h-0 flex-1">
            <Mailbox />
            <Viewer />
          </div>
        </div>
      </div>
    </div>
  );
}
